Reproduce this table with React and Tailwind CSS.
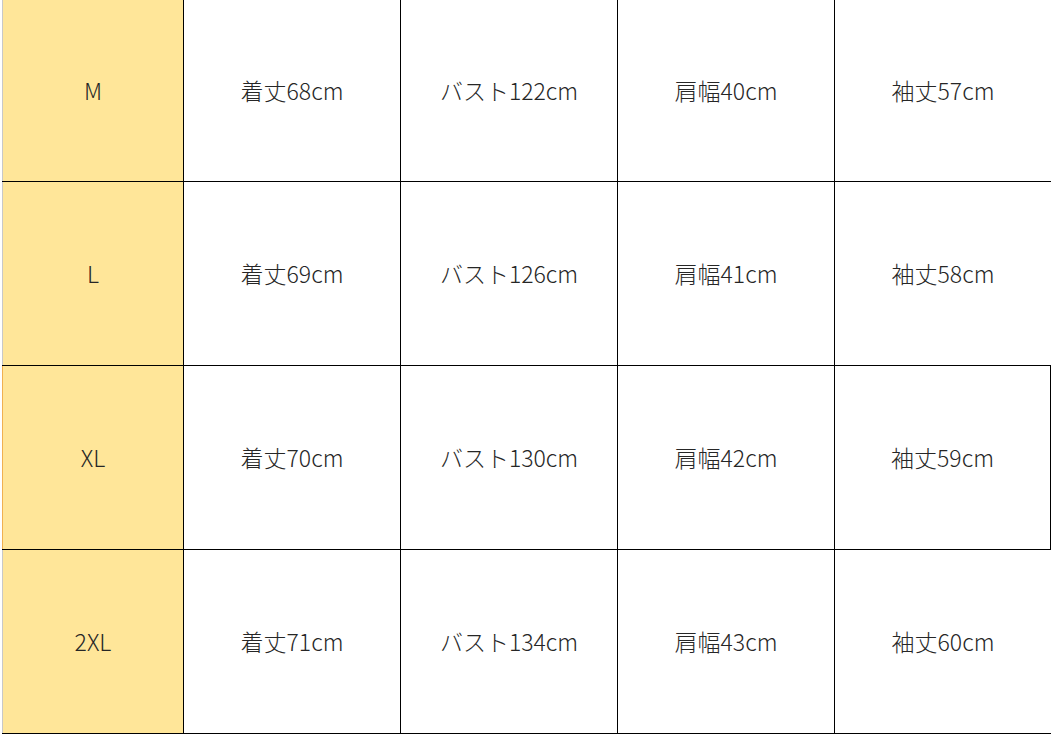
const rows = [
  { size: "M", length: "着丈68cm", bust: "バスト122cm", shoulder: "肩幅40cm", sleeve: "袖丈57cm" },
  { size: "L", length: "着丈69cm", bust: "バスト126cm", shoulder: "肩幅41cm", sleeve: "袖丈58cm" },
  { size: "XL", length: "着丈70cm", bust: "バスト130cm", shoulder: "肩幅42cm", sleeve: "袖丈59cm" },
  { size: "2XL", length: "着丈71cm", bust: "バスト134cm", shoulder: "肩幅43cm", sleeve: "袖丈60cm" },
];

export default function App() {
  return (
    <div
      className="w-[1051px] h-[735px] overflow-hidden bg-white text-[23px] font-light text-[#262626]"
      style={{ fontFamily: '"Noto Sans CJK JP", "Noto Sans", sans-serif' }}
    >
      <div className="flex flex-col pl-[2px]">
        {rows.map((row, idx) => (
          <div
            key={row.size}
            className={
              "flex border-b border-black " + (idx === 0 ? "h-[182px]" : "h-[184px]")
            }
          >
            <div
              className={
                "w-[182px] flex items-center justify-center bg-[#ffe699] border-r border-black border-l " +
                (idx === 2 ? "border-l-[#f0b050]" : "border-l-[#c8c8c8]")
              }
            >
              {row.size}
            </div>
            <div className="w-[217px] flex items-center justify-center border-r border-black">
              {row.length}
            </div>
            <div className="w-[217px] flex items-center justify-center border-r border-black">
              {row.bust}
            </div>
            <div className="w-[217px] flex items-center justify-center border-r border-black">
              {row.shoulder}
            </div>
            <div
              className={
                "w-[216px] flex items-center justify-center " +
                (idx === 2 ? "border-r border-black" : "")
              }
            >
              {row.sleeve}
            </div>
          </div>
        ))}
      </div>
    </div>
  );
}
